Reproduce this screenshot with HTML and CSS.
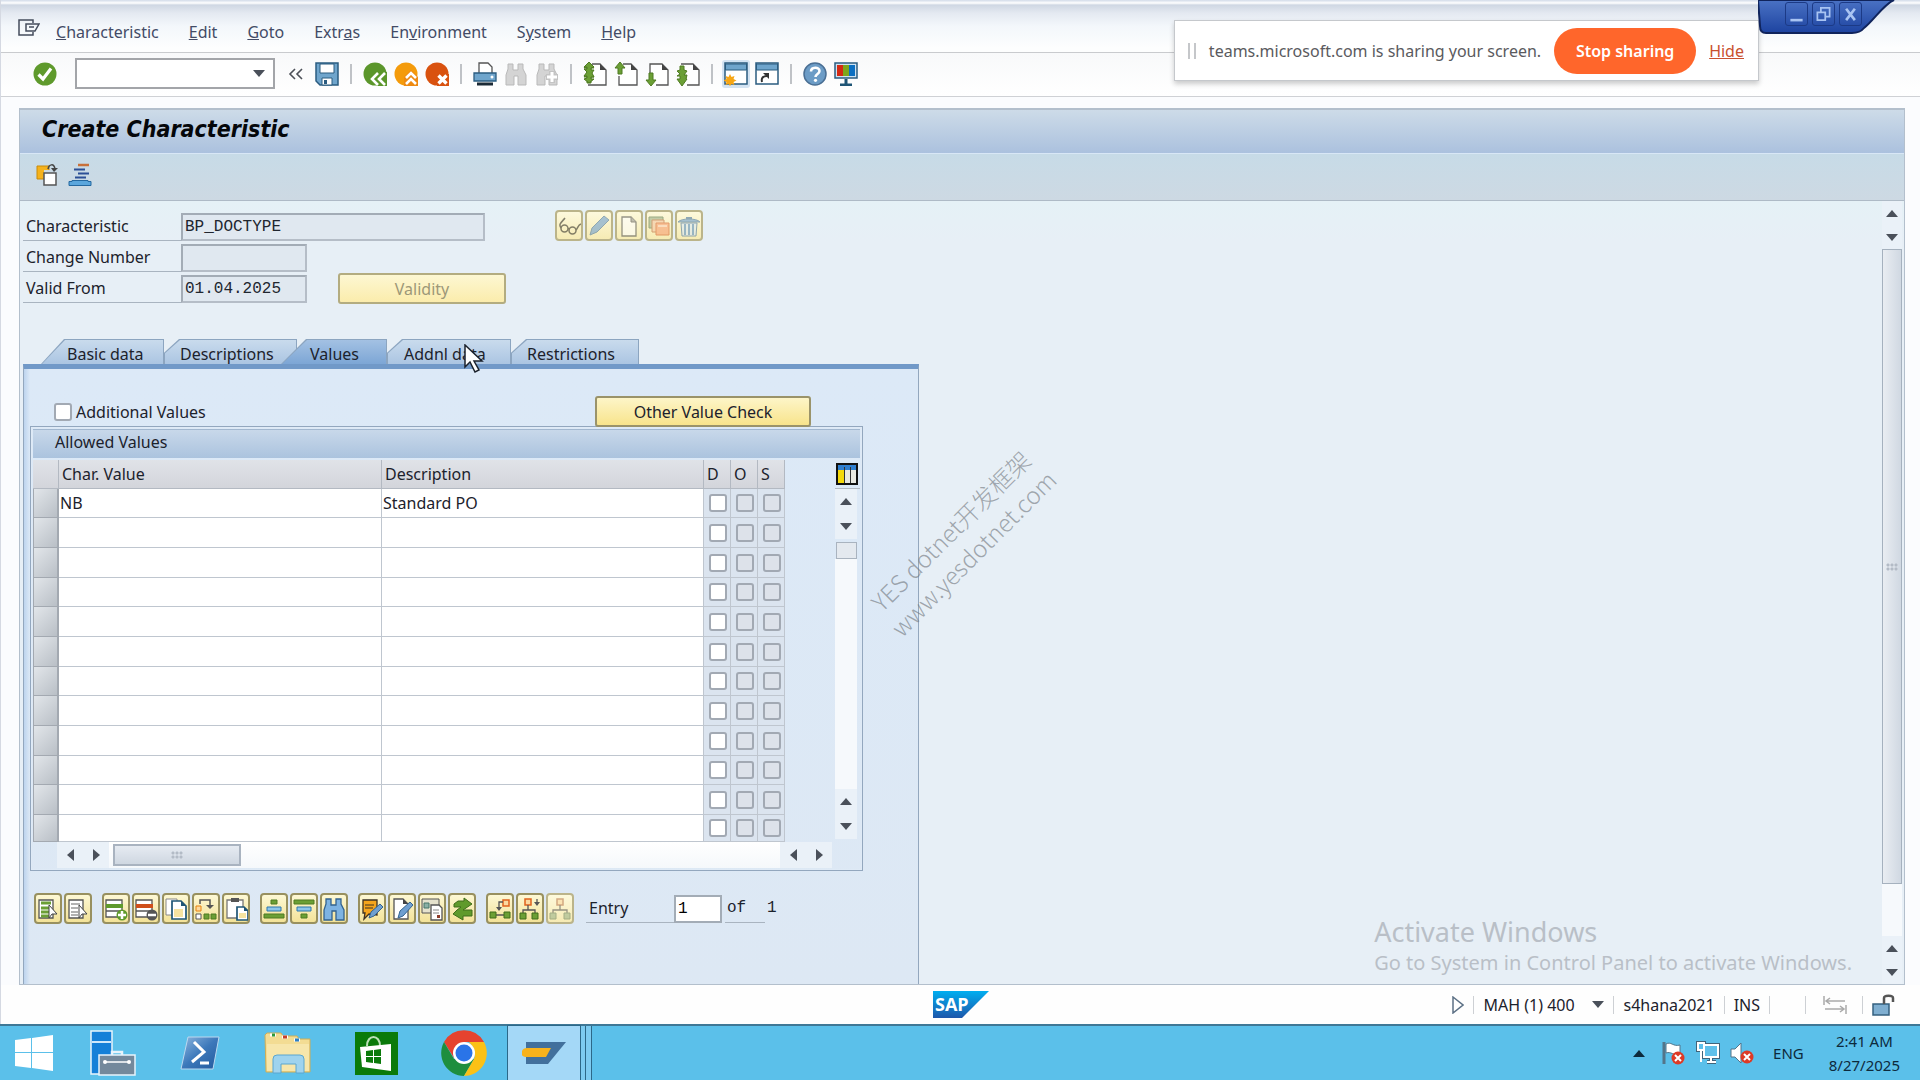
FILE: index.html
```html
<!DOCTYPE html>
<html lang="en">
<head>
<meta charset="utf-8">
<title>Create Characteristic</title>
<link rel="stylesheet" href="styles.css">
</head>
<body>
<svg class="defs" aria-hidden="true">
  <defs>
    <linearGradient id="sapfill" x1="0" y1="0" x2="0" y2="1"><stop offset="0" stop-color="#00aef0"/><stop offset="1" stop-color="#1d57ab"/></linearGradient>
    <linearGradient id="psfill" x1="0" y1="0" x2="1" y2="1"><stop offset="0" stop-color="#8fb8e0"/><stop offset=".5" stop-color="#3c78ba"/><stop offset="1" stop-color="#23599c"/></linearGradient>
    <linearGradient id="tabfill" x1="0" y1="0" x2="0" y2="1"><stop offset="0" stop-color="#4a72c4"/><stop offset="1" stop-color="#1d43a0"/></linearGradient>
  </defs>
</svg>

<div class="window">
  <nav class="menubar">
    <button class="sysmenu" aria-label="Menu"><svg width="22" height="17" viewBox="0 0 22 17" fill="none" stroke="#444c5c" stroke-width="1.5"><path d="M15 4V1H1v15h14v-3"/><path d="M8 5h13l-4 7H8z"/><path d="M11 8h5"/></svg></button>
    <button><u>C</u>haracteristic</button>
    <button><u>E</u>dit</button>
    <button><u>G</u>oto</button>
    <button>Extr<u>a</u>s</button>
    <button>En<u>v</u>ironment</button>
    <button>S<u>y</u>stem</button>
    <button><u>H</u>elp</button>
  </nav>

  <div class="toolbar">
    <button aria-label="Enter"><svg viewBox="0 0 24 24"><circle cx="12" cy="12" r="11.5" fill="#5f9a2c"/><path d="M5.5 12.5l4.500 4.500 8-10.500" fill="none" stroke="#fff" stroke-width="3.200"/></svg></button>
    <div class="command"><input type="text" aria-label="Command"><span class="caret down"></span></div>
    <button class="chev" aria-label="Collapse"><svg viewBox="0 0 24 24" fill="none" stroke="#4c5058" stroke-width="1.600"><path d="M11 7l-5 5 5 5M18 7l-5 5 5 5"/></svg></button>
    <button aria-label="Save"><svg viewBox="0 0 24 24"><path d="M1 1h22v22H5l-4-4z" fill="#6fa5cc" stroke="#2b5c80" stroke-width="1.500"/><path d="M5 2h14v9H5z" fill="#fff" stroke="#2b5c80"/><path d="M7 16h10v7H7z" fill="#fff" stroke="#2b5c80"/><path d="M9 18h3v4H9z" fill="#2b5c80"/></svg></button>
    <span class="sep"></span>
    <button aria-label="Back"><svg viewBox="0 0 24 24"><circle cx="12" cy="12" r="11.500" fill="#5b962b"/><path d="M14 10h10v14H14l-7-7z" fill="#5b962b"/><path d="M15 11l-6 6 6 6M22 11l-6 6 6 6" fill="none" stroke="#fff" stroke-width="2.600"/></svg></button>
    <button aria-label="Exit"><svg viewBox="0 0 24 24"><circle cx="12" cy="12" r="11.500" fill="#f49b0b"/><path d="M10 15l7-7 7 7v9H10z" fill="#ee8a12"/><path d="M12 16l5-5 5 5M12 22l5-5 5 5" fill="none" stroke="#fff" stroke-width="2.600"/></svg></button>
    <button aria-label="Cancel"><svg viewBox="0 0 24 24"><circle cx="12" cy="12" r="11.500" fill="#d9520f"/><path d="M12 12h12v12H12z" fill="#d9520f"/><path d="M13.500 13.500l8 8M21.500 13.500l-8 8" fill="none" stroke="#fff" stroke-width="3.400"/></svg></button>
    <span class="sep"></span>
    <button aria-label="Print"><svg viewBox="0 0 24 24"><path d="M6 11V1h9l4 4v6" fill="#fff" stroke="#555" stroke-width="1.300"/><path d="M1 11h22v8H1z" fill="#6fa5cc" stroke="#2b5c80" stroke-width="1.300"/><circle cx="19" cy="15" r="1.500" fill="#fff"/><path d="M4 22h16" stroke="#1b2a36" stroke-width="3"/></svg></button>
    <button disabled aria-label="Find"><svg viewBox="0 0 24 24"><path d="M4 2h5v6h5V2h5v5l3 6v10h-8v-9h-4v9H2V13l2-6z" fill="#d4d4d4" stroke="#b9b9b9"/></svg></button>
    <button disabled aria-label="Find next"><svg viewBox="0 0 24 24"><path d="M4 2h5v6h5V2h5v5l3 6v10h-8v-9h-4v9H2V13l2-6z" fill="#d4d4d4" stroke="#b9b9b9"/><path d="M17 9v12M11 15h12" stroke="#c4c4c4" stroke-width="6"/><path d="M17 10v10M12 15h10" stroke="#fff" stroke-width="3"/></svg></button>
    <span class="sep"></span>
    <button aria-label="First page"><svg viewBox="0 0 24 24"><path d="M9 2h8l6 6v15H5" fill="#fff" stroke="#555" stroke-width="1.300"/><path d="M17 2v6h6z" fill="#444"/><path d="M6 0l5 6H8v5H4V6H1zM6 9l5 6H8v6H4v-6H1z" fill="#6b9f35" stroke="#4f7a22"/><path d="M1 5l5-5 5 5-3 1v2h3l-2 3 2 4H8v2h3l-5 4-5-4 3-1v-2H1l3-4-3-3h3V5z" fill="#6b9f35" stroke="#4f7a22"/></svg></button>
    <button aria-label="Previous page"><svg viewBox="0 0 24 24"><path d="M9 2h8l6 6v15H5v-9" fill="#fff" stroke="#555" stroke-width="1.300"/><path d="M17 2v6h6z" fill="#444"/><path d="M6 0l5 6H8v6H4V6H1z" fill="#6b9f35" stroke="#4f7a22"/></svg></button>
    <button aria-label="Next page"><svg viewBox="0 0 24 24"><path d="M5 12V2h12l6 6v15H11" fill="#fff" stroke="#555" stroke-width="1.300"/><path d="M17 2v6h6z" fill="#444"/><path d="M6 24l5-6H8v-7H4v7H1z" fill="#6b9f35" stroke="#4f7a22"/></svg></button>
    <button aria-label="Last page"><svg viewBox="0 0 24 24"><path d="M5 2h12l6 6v15H11" fill="#fff" stroke="#555" stroke-width="1.300"/><path d="M17 2v6h6z" fill="#444"/><path d="M1 9l3-1V4h4v4l3 1-3 4h3l-1 4h1l-5 7-5-7h3v-3H1l3-2z" fill="#6b9f35" stroke="#4f7a22"/></svg></button>
    <span class="sep"></span>
    <button class="on" aria-label="New session"><svg viewBox="0 0 24 24"><path d="M1 1h22v21H1z" fill="#fff" stroke="#2b5c80" stroke-width="1.500"/><path d="M1.500 2h21v6h-21z" fill="#6fa5cc" stroke="#2b5c80"/><path d="M6 12l1.500 3 3-1-1 3 3 1.500-3 1.500 1 3-3-1L6 24l-1.500-2-3 1 1-3-3-1.500 3-1.500-1-3 3 1z" fill="#f7a614"/></svg></button>
    <button aria-label="Create shortcut"><svg viewBox="0 0 24 24"><path d="M1 1h22v21H1z" fill="#fff" stroke="#2b5c80" stroke-width="1.500"/><path d="M1.500 2h21v6h-21z" fill="#6fa5cc" stroke="#2b5c80"/><path d="M7 20c-1-4 1-6 5-6" fill="none" stroke="#333" stroke-width="2"/><path d="M8 11h6v6z" fill="#333"/></svg></button>
    <span class="sep"></span>
    <button aria-label="Help"><svg viewBox="0 0 24 24"><circle cx="12" cy="12" r="11" fill="#6c9cc6" stroke="#4a6f94" stroke-width="1.500"/><path d="M8 9.500c0-5 8.500-5 8.500-.5 0 3-4 3-4 6" fill="none" stroke="#fff" stroke-width="2.600"/><circle cx="12.500" cy="18.300" r="1.600" fill="#fff"/></svg></button>
    <button aria-label="Customize layout"><svg viewBox="0 0 24 24"><path d="M1 1h22v15H1z" fill="#cfe3f2" stroke="#2b5c80" stroke-width="1.500"/><path d="M3 3h6v11H3z" fill="#d42a14"/><path d="M9 3h6v11H9z" fill="#7fa61c"/><path d="M15 3h6v11h-6z" fill="#0b6fc2"/><path d="M12 17v5M6 23h12" stroke="#1e5576" stroke-width="3"/></svg></button>
  </div>

  <main class="work">
    <h1>Create Characteristic</h1>
    <div class="apptools">
      <button aria-label="Create from template"><svg viewBox="0 0 24 24"><path d="M2 3h12v13H2z" fill="#f5b21c" stroke="#c98a08"/><path d="M9 7h8v4H9z" fill="#cbdae5"/><path d="M9 10h12v12H9z" fill="#fff" stroke="#555" stroke-width="1.500"/><path d="M13 6c1-5 6-6 7 0" fill="none" stroke="#444" stroke-width="1.500"/><path d="M16 5h7l-4 4z" fill="#444"/></svg></button>
      <button aria-label="Hierarchy"><svg viewBox="0 0 24 24"><path d="M10 2h11" stroke="#c8703a" stroke-width="2.500"/><path d="M6 6.500h11M10 10.500h11M7 14.500h11" stroke="#2b4f96" stroke-width="2"/><path d="M1 18.500h3v-1h16v1h3v4H1z" fill="#5aa6dd" stroke="#2468a0"/></svg></button>
    </div>

    <div class="screen">
      <div class="content">
        <div class="form">
          <div class="field"><label for="f-char">Characteristic</label><input id="f-char" class="wide" type="text" value="BP_DOCTYPE" readonly>
            <div class="pushes">
              <button class="push dim" aria-label="Display"><svg viewBox="0 0 24 24" fill="none" stroke="#35332a" stroke-width="1.500"><circle cx="7.500" cy="14.500" r="3.500"/><circle cx="15.500" cy="16.500" r="3.500"/><path d="M4 14c-3-4 1-6 4-10M19 16c2-2 2-5 5-6M11 14.500l1.500.5"/></svg></button>
              <button class="push dim" aria-label="Change"><svg viewBox="0 0 24 24"><path d="M3 21l2-7L17 2l5 4L10 18z" fill="#6f9fd0" stroke="#49759f"/></svg></button>
              <button class="push dim" aria-label="Create"><svg viewBox="0 0 24 24"><path d="M5 3h9l5 5v14H5z" fill="#fff" stroke="#555" stroke-width="1.300"/><path d="M14 3v5h5" fill="#999" stroke="#555"/></svg></button>
              <button class="push dim" aria-label="Copy"><svg viewBox="0 0 24 24"><path d="M2 3h14v11H2z" fill="#9fb08a" stroke="#5d7a50"/><path d="M5 6h12v12H5z" fill="#f3c7a4" stroke="#b96a3c"/><path d="M9 9h13v12H9z" fill="#f7a073" stroke="#d4622f"/><path d="M11 12h9" stroke="#fff"/></svg></button>
              <button class="push dim" aria-label="Delete"><svg viewBox="0 0 24 24"><path d="M1 8c3-4 19-4 22 0z" fill="#6f9fd0" stroke="#49759f"/><path d="M9 4h6" stroke="#49759f" stroke-width="2"/><path d="M4 9h16l-1 13H5z" fill="#dbe9f5" stroke="#49759f"/><path d="M8 10v11M12 10v11M16 10v11" stroke="#5a8fc4" stroke-width="2"/></svg></button>
            </div>
          </div>
          <div class="field"><label for="f-chg">Change Number</label><input id="f-chg" type="text" value="" readonly></div>
          <div class="field"><label for="f-valid">Valid From</label><input id="f-valid" type="text" value="01.04.2025" readonly><button class="bar validity" disabled>Validity</button></div>
        </div>

        <div class="tabs" role="tablist">
          <button class="tab first" role="tab">Basic data</button>
          <button class="tab desc" role="tab">Descriptions</button>
          <button class="tab active" role="tab" aria-selected="true">Values</button>
          <button class="tab addnl" role="tab">Addnl data</button>
          <button class="tab restr" role="tab">Restrictions</button>
        </div>

        <section class="panel">
          <div class="options">
            <label class="check"><input type="checkbox">Additional Values</label>
            <button class="bar other">Other Value Check</button>
          </div>

          <div class="grid">
            <h2>Allowed Values</h2>
            <div class="gridbody">
              <table>
                <colgroup><col class="c-sel"><col class="c-val"><col class="c-desc"><col class="c-flag"><col class="c-flag"><col class="c-flag"></colgroup>
                <thead><tr><th></th><th>Char. Value</th><th>Description</th><th>D</th><th>O</th><th>S</th></tr></thead>
                <tbody>
                  <tr><th></th><td>NB</td><td>Standard PO</td><td><input type="checkbox" aria-label="D"></td><td><input type="checkbox" aria-label="O" disabled></td><td><input type="checkbox" aria-label="S" disabled></td></tr>
                  <tr><th></th><td></td><td></td><td><input type="checkbox" aria-label="D"></td><td><input type="checkbox" aria-label="O" disabled></td><td><input type="checkbox" aria-label="S" disabled></td></tr>
                  <tr><th></th><td></td><td></td><td><input type="checkbox" aria-label="D"></td><td><input type="checkbox" aria-label="O" disabled></td><td><input type="checkbox" aria-label="S" disabled></td></tr>
                  <tr><th></th><td></td><td></td><td><input type="checkbox" aria-label="D"></td><td><input type="checkbox" aria-label="O" disabled></td><td><input type="checkbox" aria-label="S" disabled></td></tr>
                  <tr><th></th><td></td><td></td><td><input type="checkbox" aria-label="D"></td><td><input type="checkbox" aria-label="O" disabled></td><td><input type="checkbox" aria-label="S" disabled></td></tr>
                  <tr><th></th><td></td><td></td><td><input type="checkbox" aria-label="D"></td><td><input type="checkbox" aria-label="O" disabled></td><td><input type="checkbox" aria-label="S" disabled></td></tr>
                  <tr><th></th><td></td><td></td><td><input type="checkbox" aria-label="D"></td><td><input type="checkbox" aria-label="O" disabled></td><td><input type="checkbox" aria-label="S" disabled></td></tr>
                  <tr><th></th><td></td><td></td><td><input type="checkbox" aria-label="D"></td><td><input type="checkbox" aria-label="O" disabled></td><td><input type="checkbox" aria-label="S" disabled></td></tr>
                  <tr><th></th><td></td><td></td><td><input type="checkbox" aria-label="D"></td><td><input type="checkbox" aria-label="O" disabled></td><td><input type="checkbox" aria-label="S" disabled></td></tr>
                  <tr><th></th><td></td><td></td><td><input type="checkbox" aria-label="D"></td><td><input type="checkbox" aria-label="O" disabled></td><td><input type="checkbox" aria-label="S" disabled></td></tr>
                  <tr><th></th><td></td><td></td><td><input type="checkbox" aria-label="D"></td><td><input type="checkbox" aria-label="O" disabled></td><td><input type="checkbox" aria-label="S" disabled></td></tr>
                  <tr><th></th><td></td><td></td><td><input type="checkbox" aria-label="D"></td><td><input type="checkbox" aria-label="O" disabled></td><td><input type="checkbox" aria-label="S" disabled></td></tr>
                </tbody>
              </table>
              <div class="vside">
                <button class="config" aria-label="Table settings"><svg width="22" height="22" viewBox="0 0 22 22"><path d="M1 1h20v20H1z" fill="#e9e9e2" stroke="#111" stroke-width="2"/><path d="M2 2h18v5H2z" fill="#2f7fd0"/><path d="M2 7h6v13H2z" fill="#f5d90a"/><path d="M8.500 4v16M14.500 4v16" stroke="#333"/></svg></button>
                <div class="vscroll">
                  <button aria-label="Up"><span class="caret up"></span></button>
                  <button aria-label="Page up"><span class="caret down"></span></button>
                  <span class="vthumb"></span>
                  <span class="fill"></span>
                  <button aria-label="Page down"><span class="caret up"></span></button>
                  <button aria-label="Down"><span class="caret down"></span></button>
                </div>
              </div>
            </div>
            <div class="hscroll">
              <button aria-label="Left"><span class="caret left"></span></button>
              <button aria-label="Page left"><span class="caret right"></span></button>
              <span class="htrack"><span class="hthumb"><span class="grip"></span></span></span>
              <button aria-label="Page right"><span class="caret left"></span></button>
              <button aria-label="Right"><span class="caret right"></span></button>
            </div>
          </div>

          <div class="actions">
            <div class="pushes">
              <button class="push" aria-label="Select all"><svg viewBox="0 0 24 24"><path d="M3 3h14v18H3z" fill="#fff" stroke="#555" stroke-width="1.300"/><path d="M5 6h10M5 11h8M5 15h8M5 19h8" stroke="#6b9f35" stroke-width="3"/><path d="M13 8l8 9h-5l-3 4z" fill="#fff" stroke="#444"/></svg></button>
              <button class="push" aria-label="Deselect all"><svg viewBox="0 0 24 24"><path d="M3 3h14v18H3z" fill="#fff" stroke="#555" stroke-width="1.300"/><path d="M5 7h9M5 11h7M5 15h7M5 18h7" stroke="#999" stroke-width="1.300"/><path d="M13 8l8 9h-5l-3 4z" fill="#fff" stroke="#444"/></svg></button>
            </div>
            <div class="pushes">
              <button class="push" aria-label="Insert row"><svg viewBox="0 0 24 24"><path d="M2 3h16v17H2zM2 14h16" fill="#fff" stroke="#555" stroke-width="1.300"/><path d="M2 9h17" stroke="#5f9a2c" stroke-width="4"/><circle cx="18" cy="18" r="5.500" fill="#5f9a2c"/><path d="M18 14v8M14 18h8" stroke="#fff" stroke-width="2.500"/></svg></button>
              <button class="push" aria-label="Delete row"><svg viewBox="0 0 24 24"><path d="M2 3h16v17H2zM2 14h16" fill="#fff" stroke="#555" stroke-width="1.300"/><path d="M2 9h17" stroke="#cf4f1b" stroke-width="4"/><circle cx="18" cy="18" r="5.500" fill="#555"/><path d="M14 18h8" stroke="#fff" stroke-width="2.500"/></svg></button>
              <button class="push" aria-label="Copy rows"><svg viewBox="0 0 24 24"><path d="M2 2h11v16H2z" fill="#fff" stroke="#888"/><path d="M8 4h9l5 5v13H8z" fill="#fff" stroke="#1e5576" stroke-width="1.700"/><path d="M17 4v5h5z" fill="#1e5576"/><path d="M10 12h9v8h-9z" fill="#f6e3a0"/></svg></button>
              <button class="push" aria-label="Move rows"><svg viewBox="0 0 24 24"><path d="M6 7V3h10v7" fill="none" stroke="#555" stroke-width="1.500"/><path d="M12 8h8l-4 4z" fill="#555"/><path d="M2 9h5v5H2z" fill="#fbd9a0" stroke="#e8820c"/><path d="M2 17h5v5H2z" fill="#fff" stroke="#555"/><path d="M10 17h5v5h-5zM17 17h5v5h-5z" fill="#6b9f35" stroke="#4f7a22"/></svg></button>
              <button class="push" aria-label="Paste"><svg viewBox="0 0 24 24"><path d="M3 3h16v18H3z" fill="#fff" stroke="#777" stroke-width="1.300"/><path d="M7 1h8v4H7z" fill="#555"/><path d="M13 10h7l4 4v9H13z" fill="#fff" stroke="#1e5576" stroke-width="1.700"/><path d="M20 10v4h4z" fill="#1e5576"/><path d="M15 16h7v5h-7z" fill="#f6e3a0"/></svg></button>
            </div>
            <div class="pushes">
              <button class="push" aria-label="Sort ascending"><svg viewBox="0 0 24 24"><path d="M9 3h6v4H9z" fill="#6b9f35" stroke="#4f7a22"/><path d="M5 10h14v4H5z" fill="#8cc6ea" stroke="#2d76ad"/><path d="M2 17h20v4H2z" fill="#6b9f35" stroke="#4f7a22"/></svg></button>
              <button class="push" aria-label="Sort descending"><svg viewBox="0 0 24 24"><path d="M2 3h20v4H2z" fill="#6b9f35" stroke="#4f7a22"/><path d="M5 10h14v4H5z" fill="#8cc6ea" stroke="#2d76ad"/><path d="M9 17h6v4H9z" fill="#6b9f35" stroke="#4f7a22"/></svg></button>
              <button class="push" aria-label="Find value"><svg viewBox="0 0 24 24"><path d="M4 2h5v6h5V2h5v5l3 6v10h-8v-9h-4v9H2V13l2-6z" fill="#7db3e2" stroke="#33638f" stroke-width="1.300"/></svg></button>
            </div>
            <div class="pushes">
              <button class="push" aria-label="Edit long text"><svg viewBox="0 0 24 24"><path d="M3 3h14v15l-8-1-5 5 1-6H3z" fill="#f5a51c" stroke="#3c3224" stroke-width="1.300"/><path d="M5 8h9M5 11h8" stroke="#3c3224"/><path d="M9 21l2-6 9-8 3 3-9 9z" fill="#6f9fd0" stroke="#33638f"/></svg></button>
              <button class="push" aria-label="Edit document"><svg viewBox="0 0 24 24"><path d="M4 2h9l5 5v15H4z" fill="#fff" stroke="#555" stroke-width="1.300"/><path d="M13 2v5h5z" fill="#444"/><path d="M8 21l2-7 10-9 3 3-10 11z" fill="#6f9fd0" stroke="#33638f"/></svg></button>
              <button class="push" aria-label="Documents"><svg viewBox="0 0 24 24"><path d="M2 2h17v14H2z" fill="#e5e2cd" stroke="#555"/><path d="M4 6h5v5H4z" fill="#8ab0a5" stroke="#47776a"/><path d="M11 8h8l3 3v12H11z" fill="#fff" stroke="#555" stroke-width="1.300"/><path d="M13 13h6M13 16h6" stroke="#888"/><path d="M17 18h3v3h-3z" fill="#8d3b2a"/></svg></button>
              <button class="push" aria-label="Exchange"><svg viewBox="0 0 24 24"><path d="M4 7l4-3h6V1l8 6-9 6h9v6h-9v4l-10-6 4-4 4-3H4z" fill="#5f9a2c" stroke="#3f6d1b"/></svg></button>
            </div>
            <div class="pushes">
              <button class="push" aria-label="Same level"><svg viewBox="0 0 24 24"><path d="M15 3h6v6h-6z" fill="#fbd9a0" stroke="#e0621c" stroke-width="1.500"/><path d="M15 5h-4v6M7 18h10" fill="none" stroke="#555" stroke-width="1.300"/><path d="M8 10h6l-3 4z" fill="#555"/><path d="M2 15h6v6H2zM16 15h6v6h-6z" fill="#6b9f35" stroke="#3f6d1b"/></svg></button>
              <button class="push" aria-label="Lower level"><svg viewBox="0 0 24 24"><path d="M7 2h6v6H7z" fill="#fbd9a0" stroke="#e0621c" stroke-width="1.500"/><path d="M10 8v5M5 16v-3h12v3M19 2v4" fill="none" stroke="#555" stroke-width="1.300"/><path d="M16 5h6l-3 4z" fill="#555"/><path d="M2 16h6v6H2zM14 16h6v6h-6z" fill="#6b9f35" stroke="#3f6d1b"/></svg></button>
              <button class="push dim" aria-label="Hierarchy view"><svg viewBox="0 0 24 24"><path d="M9 2h6v6H9z" fill="#fbd9a0" stroke="#b9774c" stroke-width="1.500"/><path d="M12 8v5M5 16v-3h14v3" fill="none" stroke="#555" stroke-width="1.300"/><path d="M2 16h6v6H2zM16 16h6v6h-6z" fill="#9db58a" stroke="#6f8560"/></svg></button>
            </div>
            <div class="entry"><label for="f-entry">Entry</label><input id="f-entry" type="text" value="1"><span class="of">of</span><span class="total">1</span></div>
          </div>
        </section>
      </div>

      <div class="pagescroll">
        <button aria-label="Scroll up"><span class="caret up"></span></button>
        <button aria-label="Scroll page up"><span class="caret down"></span></button>
        <span class="pthumb"><span class="grip"></span></span>
        <span class="fill"></span>
        <button aria-label="Scroll page down"><span class="caret up"></span></button>
        <button aria-label="Scroll down"><span class="caret down"></span></button>
      </div>

      <div class="activate"><p class="big">Activate Windows</p><p>Go to System in Control Panel to activate Windows.</p></div>
    </div>
  </main>

  <footer class="status">
    <svg class="saplogo" width="56" height="27" viewBox="0 0 56 27" role="img" aria-label="SAP"><path d="M0 0h56L29 27H0z" fill="url(#sapfill)"/><text x="2" y="20">SAP</text></svg>
    <div class="info">
      <svg width="12" height="18" viewBox="0 0 12 18"><path d="M1 1l10 8-10 8z" fill="#fff" stroke="#5c7085" stroke-width="1.500"/></svg>
      <span class="line"></span>
      <button class="session">MAH (1) 400<span class="caret down"></span></button>
      <span class="line"></span>
      <span>s4hana2021</span>
      <span class="line"></span>
      <span>INS</span>
      <span class="line"></span>
      <span class="blank"></span>
      <span class="line"></span>
      <svg class="arrows" width="24" height="18" viewBox="0 0 24 18" fill="none" stroke="#aaa" stroke-width="1.500"><path d="M1 0v9M3 5h19M7 2L3 5l4 3M23 9v9M2 13h19M17 10l4 3-4 3"/></svg>
      <span class="line"></span>
      <svg width="24" height="22" viewBox="0 0 24 22"><path d="M1 10h16v11H1z" fill="#7faed0" stroke="#35607f" stroke-width="1.500"/><path d="M12 10V4c0-3 9-3 9 0v4" fill="none" stroke="#555" stroke-width="2.500"/></svg>
    </div>
  </footer>
</div>

<nav class="taskbar">
  <div class="apps">
    <button class="start" aria-label="Start"><svg width="38" height="36" viewBox="0 0 38 36" fill="#fff"><path d="M0 5l16-2v14H0zM17 3l21-3v17H17zM0 18h16v15L0 31zM17 18h21v18l-21-3z"/></svg></button>
    <button class="server" aria-label="Server Manager"><svg width="46" height="46" viewBox="0 0 46 46"><path d="M1 1h21v43H1z" fill="#1580d8" stroke="#e8f4fc" stroke-width="1.500"/><path d="M2 12h19" stroke="#cfe8fa" stroke-width="2"/><path d="M9 25h36v20H9z" fill="#74899c" stroke="#e8f4fc" stroke-width="1.500"/><path d="M22 25v-3h10v3" fill="none" stroke="#e8f4fc" stroke-width="2.500"/><path d="M14 32h26" stroke="#fff" stroke-width="1.500"/><circle cx="15" cy="32" r="2" fill="#fff"/><circle cx="39" cy="32" r="2" fill="#fff"/></svg></button>
    <button aria-label="PowerShell"><svg width="40" height="34" viewBox="0 0 40 34"><path d="M8 1h31l-6 32H1z" fill="url(#psfill)" stroke="#bcd8ef"/><path d="M14 6l10 10-12 10M20 27h9" fill="none" stroke="#fff" stroke-width="3"/></svg></button>
    <button aria-label="File Explorer"><svg width="48" height="42" viewBox="0 0 48 42"><path d="M1 3l2-2h14l2 3h14l2 3h11v33H2z" fill="#f3dc93" stroke="#cfae57"/><path d="M6 3h6M18 5h6M30 8h6" stroke="#fff" stroke-width="3"/><path d="M8 3h3" stroke="#2c9a3c" stroke-width="3"/><path d="M19 5h4" stroke="#c7412d" stroke-width="3"/><path d="M31 8h4" stroke="#2d7fc4" stroke-width="3"/><path d="M3 12h42v27H3z" fill="#f7e6ab"/><path d="M9 41V27q0-4 4-4h23q4 0 4 4v14h-8v-9H17v9z" fill="#9fd3ee" stroke="#5aa6d0"/></svg></button>
    <button aria-label="Store"><svg width="43" height="43" viewBox="0 0 43 43"><path d="M0 0h43v43H0z" fill="#0a7a0a"/><path d="M12 14c0-12 13-12 13 0" fill="none" stroke="#bde0b8" stroke-width="2"/><path d="M5 15l31-3v27L7 35z" fill="#fff"/><path d="M11 19l7-1v6h-7zM19 18l7-1v7h-7zM11 25h7v6l-7-1zM19 25h7v7l-7-1z" fill="#0a7a0a"/></svg></button>
    <button aria-label="Chrome"><svg width="46" height="46" viewBox="0 0 46 46"><path d="M3 12A23 23 0 0 1 43 12H23L13 28z" fill="#e5432f"/><path d="M3 12A23 23 0 0 0 23 46l10-17H13z" fill="#1e8e3e"/><path d="M43 12A23 23 0 0 1 23 46l10-17q3-9-5-17z" fill="#fbc116"/><circle cx="23" cy="23" r="11" fill="#fff"/><circle cx="23" cy="23" r="8.500" fill="#2a74e8"/></svg></button>
    <button class="current" aria-label="SAP GUI"><svg width="44" height="22" viewBox="0 0 44 22"><path d="M4 0h40L26 22H4z" fill="#42709c"/><path d="M0 9q1-3 5-3h24l-5 9H5q-4 0-5-2z" fill="#f7b21c"/></svg></button>
  </div>
  <div class="tray">
    <button aria-label="Show hidden icons"><span class="caret up"></span></button>
    <svg width="24" height="24" viewBox="0 0 24 24"><path d="M2 1v22" stroke="#53758a" stroke-width="3"/><path d="M4 3c5-3 7 3 14 1v9c-7 2-9-3-14-1z" fill="#fff" stroke="#53758a"/><circle cx="16" cy="17" r="6.500" fill="#dd3a26"/><path d="M13 14l6 6M19 14l-6 6" stroke="#fff" stroke-width="2"/></svg>
    <svg width="24" height="24" viewBox="0 0 24 24"><g fill="#5fc0ea" stroke="#41647a" stroke-width="4"><path d="M8 4h14v12H8z"/><path d="M2 2h6v7H2zM11 21h9M15 16v5"/></g><g fill="#5fc0ea" stroke="#fff" stroke-width="2"><path d="M8 4h14v12H8z"/><path d="M2 2h6v7H2zM5 9v12M11 21h9M15 16v5"/></g></svg>
    <svg width="24" height="24" viewBox="0 0 24 24"><path d="M1 8h4l6-6v20l-6-6H1z" fill="#fff" stroke="#53758a"/><circle cx="17" cy="16" r="6.500" fill="#dd3a26"/><path d="M14 13l6 6M20 13l-6 6" stroke="#fff" stroke-width="2"/></svg>
    <span class="lang">ENG</span>
    <div class="clock"><span>2:41 AM</span><span>8/27/2025</span></div>
  </div>
</nav>

<div class="sharing">
  <span class="handle"></span>
  <span>teams.microsoft.com is sharing your screen.</span>
  <button>Stop sharing</button>
  <a href="#">Hide</a>
</div>

<div class="winctl">
  <svg width="138" height="37" viewBox="0 0 138 37"><path d="M0 0h136c-10 4-20 20-30 28q-4 5-12 5H8q-6 0-6-7z" fill="url(#tabfill)" stroke="#10245c" stroke-width="2"/></svg>
  <div class="winbtns">
    <button aria-label="Minimize"><svg viewBox="0 0 24 24"><path d="M5 19h14" stroke="#a9c4f2" stroke-width="3"/></svg></button>
    <button aria-label="Restore"><svg viewBox="0 0 24 24" fill="none" stroke="#a9c4f2" stroke-width="2"><path d="M9 9V5h10v10h-4M5 10h9v9H5z"/></svg></button>
    <button aria-label="Close"><svg viewBox="0 0 24 24"><path d="M7 6l10 13M17 6L7 19" stroke="#a9c4f2" stroke-width="3"/></svg></button>
  </div>
</div>

<div class="watermark"><span>YES dotnet开发框架</span><span>www.yesdotnet.com</span></div>
<svg class="pointer" width="20" height="30" viewBox="0 0 20 30"><path d="M1 1v22l5-5 5 10 4-2-5-9h8z" fill="#fff" stroke="#1b222c" stroke-width="1.500"/></svg>
</body>
</html>
```
FILE: styles.css
```css
* { box-sizing: border-box; }
body {
  margin: 0;
  min-height: 100vh;
  display: flex;
  flex-direction: column;
  position: relative;
  background: #fbfcfe;
  color: #1c222c;
  font: 16px/24px "Noto Sans", "Open Sans", sans-serif;
}
button { font: inherit; color: inherit; background: none; border: 0; padding: 0; margin: 0; }
h1, h2, p { margin: 0; }
svg { display: block; flex: none; }
.defs { position: absolute; width: 0; height: 0; }

.caret { width: 0; height: 0; border: 6px solid transparent; flex: none; }
.caret.up { border-top: 0; border-bottom: 7px solid #4a505a; }
.caret.down { border-bottom: 0; border-top: 7px solid #4a505a; }
.caret.left { border-left: 0; border-right: 7px solid #4a505a; }
.caret.right { border-right: 0; border-left: 7px solid #4a505a; }
.grip {
  width: 12px;
  height: 8px;
  background: radial-gradient(circle, #b3bbc6 1px, transparent 2px) 0 0 / 4px 4px;
}

.window { flex: 1; display: flex; flex-direction: column; border-left: 1px solid #d5d9e2; }

.menubar {
  height: 53px;
  padding: 0 17px;
  display: flex;
  align-items: center;
  gap: 30px;
  color: #434b66;
  background: linear-gradient(#d2dbe9 0, #fff 3px, #cfd7e3 5px, #e4e9f1 13px, #f3f7fb 26px, #fdfefe 48px);
  border-bottom: 1px solid #c9cbce;
}
.menubar button { margin-top: 11px; }
.menubar .sysmenu { margin: 2px -14px 0 0; }

.toolbar {
  height: 44px;
  padding: 0 0 2px 32px;
  display: flex;
  align-items: center;
  gap: 7px;
  background: linear-gradient(#f8f9fa, #fff);
  border-bottom: 1px solid #cfd1d5;
}
.toolbar svg { width: 24px; height: 24px; }
.toolbar .sep { width: 10px; height: 20px; background: linear-gradient(#bfc2c6, #bfc2c6) center / 2px 100% no-repeat; }
.toolbar .on { margin: 0 -2px; padding: 2px; background: #d3e3f2; border-radius: 3px; }
.toolbar .chev { margin-left: 2px; }
.command {
  width: 200px;
  height: 31px;
  margin-left: 11px;
  display: flex;
  align-items: center;
  padding-right: 8px;
  background: #fff;
  border: 2px solid #a3a5a9;
}
.command input { flex: 1; min-width: 0; border: 0; outline: 0; background: none; font: inherit; }

.work {
  flex: 1;
  display: flex;
  flex-direction: column;
  margin: 11px 15px 0 18px;
  border: 1px solid #b3bfcc;
  border-top-width: 2px;
}
h1 {
  height: 44px;
  padding-left: 22px;
  font: italic bold 23px/38px "DejaVu Sans Condensed", "DejaVu Sans", sans-serif;
  color: #05070a;
  background: linear-gradient(#cddbe8, #abc1de);
  border-bottom: 1px solid #d8e7f6;
}
.apptools {
  height: 47px;
  padding: 0 15px 4px;
  display: flex;
  align-items: center;
  gap: 9px;
  background: linear-gradient(#c7dbe7, #cdd9e3);
  border-bottom: 1px solid #aebac6;
}
.apptools svg { width: 24px; height: 24px; }

.screen {
  flex: 1;
  display: flex;
  position: relative;
  background: linear-gradient(#e5f1f6, #e7eff6 40px);
}
.content { flex: 1; display: flex; flex-direction: column; padding-left: 3px; }

.form { display: grid; gap: 3px; padding-top: 12px; }
.field { display: flex; height: 28px; }
.field label { width: 158px; padding-left: 3px; line-height: 27px; border-bottom: 1px solid #a9b4c0; }
.field input {
  width: 126px;
  padding: 0 2px;
  font: 16px/24px "Liberation Mono", monospace;
  color: #20262f;
  background: #e0e8f0;
  border: 2px solid #a3acb6;
  border-right-color: #b5bdc7;
  border-bottom-color: #b5bdc7;
}
.field .wide { width: 304px; }
.field .pushes { margin: -3px 0 0 70px; }
.pushes { display: flex; gap: 2px; }
.push {
  width: 28px;
  height: 31px;
  display: flex;
  align-items: center;
  justify-content: center;
  background: linear-gradient(#fdf8d4, #f3e298);
  border: 2px solid #98905f;
  border-radius: 4px;
}
.push svg { width: 24px; height: 24px; }
.push.dim { border-color: #bbb48a; background: linear-gradient(#fdf9dc, #f6ebb4); }
.push.dim svg { opacity: .6; }
.bar {
  height: 31px;
  background: linear-gradient(#fdf5c8, #f8e48c);
  border: 2px solid #9a936a;
  border-radius: 3px;
  line-height: 26px;
}
.validity { width: 168px; margin: -2px 0 0 31px; color: #9d9878; border-color: #b3ac80; background: linear-gradient(#fdf7d2, #fbecac); }

.tabs { display: flex; height: 25px; margin-top: 36px; padding-left: 18px; }
.tab {
  position: relative;
  z-index: 0;
  height: 25px;
  line-height: 26px;
  padding: 2px 0 0 17px;
  text-align: left;
  --shape: polygon(0 100%, 0 55%, 15px 0, 100% 0, 100% 100%);
}
.tab::before, .tab::after { content: ""; position: absolute; z-index: -1; inset: 0; clip-path: var(--shape); background: #8ca5c0; }
.tab::after { inset: 1px 1px 0 1px; background: linear-gradient(#c9dbed, #abc5e2); }
.first { width: 123px; padding-left: 26px; --shape: polygon(0 100%, 23px 0, 100% 0, 100% 100%); }
.desc { width: 133px; padding-left: 16px; }
.active { z-index: 1; width: 106px; margin-left: -16px; padding-left: 29px; --shape: polygon(0 100%, 25px 0, 100% 0, 100% 100%); }
.active::after { background: linear-gradient(#a3c1e3, #7da6d5); }
.addnl { width: 124px; }
.restr { width: 128px; padding-left: 16px; }

.panel {
  flex: 1;
  max-width: 896px;
  padding: 27px 6px 40px;
  border: 1px solid #93a7be;
  border-top: 5px solid #7199c8;
  border-bottom: 0;
  background: linear-gradient(90deg, #bdd4ee, rgba(221, 232, 244, 0) 6px), linear-gradient(#dce9f7, #dde8f4);
}
.options { display: flex; justify-content: space-between; width: 832px; height: 30px; padding: 0 51px 0 24px; }
.check { display: flex; align-items: center; gap: 4px; padding-top: 2px; }
.other { width: 216px; }
input[type="checkbox"] {
  appearance: none;
  display: block;
  width: 18px;
  height: 18px;
  margin: 0;
  background: #fff;
  border: 2px solid #a2a9b3;
  border-radius: 3px;
}
input[type="checkbox"]:disabled { background: #dde2ea; }

.grid { width: 833px; padding: 2px; border: 1px solid #93a7be; box-shadow: inset 0 0 0 1px #dfeaf6; }
h2 {
  height: 29px;
  padding-left: 22px;
  margin-bottom: 2px;
  font: inherit;
  background: linear-gradient(#c8d8ea, #abc3de);
  border-top: 1px solid #a2b7cf;
}
.gridbody { display: flex; justify-content: space-between; }
table { width: 752px; table-layout: fixed; border-collapse: separate; border-spacing: 0; }
.c-sel { width: 26px; }
.c-val { width: 323px; }
.c-desc { width: 322px; }
.c-flag { width: 27px; }
thead th {
  height: 29px;
  padding: 0 0 0 3px;
  text-align: left;
  font-weight: normal;
  background: linear-gradient(#e0e3e8, #d3d5db);
  border-right: 1px solid #b3b9c2;
  border-bottom: 1px solid #b3b9c2;
}
tbody th {
  background: linear-gradient(135deg, #e2e6ea, #b9bfc6);
  border: 1px solid #a3a9b1;
  border-right-width: 2px;
  border-top: 0;
}
tbody tr { height: 30px; }
tbody tr:nth-child(3n+1) { height: 29px; }
tbody tr:last-child { height: 27px; }
tbody td {
  padding: 0 0 0 1px;
  line-height: 20px;
  background: #fff;
  border-right: 1px solid #bfc6cf;
  border-bottom: 1px solid #bfc6cf;
}
tbody td:nth-child(n+4) { padding-left: 5px; background: #dbe4ef; }

.vside { width: 25px; display: flex; flex-direction: column; }
.config { height: 29px; padding-left: 1px; border-bottom: 1px solid #b3b9c2; }
.vscroll { flex: 1; display: flex; flex-direction: column; padding: 0 3px 3px 0; }
.vscroll button, .pagescroll button { height: 25px; display: flex; align-items: center; justify-content: center; background: #eaf1f8; }
.vthumb { height: 17px; margin: 3px 0 0 1px; background: #e4e9ef; border: 1px solid #a9b3bf; }
.fill { flex: 1; background: #f6f9fc; }
.hscroll { display: flex; height: 26px; padding: 0 28px 0 24px; }
.hscroll button { width: 26px; display: flex; align-items: center; justify-content: center; background: #eaf1f8; }
.htrack { flex: 1; padding: 2px 0 1px 4px; background: linear-gradient(#fff, #f5f8fb); }
.hthumb {
  width: 128px;
  height: 22px;
  display: flex;
  align-items: center;
  justify-content: center;
  background: linear-gradient(#e6ebf2, #cfd7e1);
  border: 2px solid #a9b3c0;
}

.actions { display: flex; gap: 10px; padding: 22px 0 0 4px; }
.entry { display: flex; height: 28px; margin: 2px 0 0 2px; line-height: 26px; }
.entry label { width: 88px; padding-left: 3px; border-bottom: 1px solid #a9b4c0; }
.entry input { width: 48px; padding: 0 2px; font: 16px/24px "Liberation Mono", monospace; border: 2px solid #a3acb6; }
.entry .of { width: 40px; margin-left: 3px; padding-left: 2px; font-family: "Liberation Mono", monospace; border-bottom: 1px solid #a9b4c0; }
.entry .total { padding-left: 2px; font-family: "Liberation Mono", monospace; }

.pagescroll { width: 22px; display: flex; flex-direction: column; padding-right: 2px; }
.pagescroll button { height: 24px; }
.pthumb {
  flex: 1;
  display: flex;
  align-items: center;
  justify-content: center;
  background: linear-gradient(90deg, #e9edf2, #d0d8e2);
  border: 1px solid #a5b1be;
}
.pagescroll .fill { flex: 0 0 52px; }
.activate { position: absolute; right: 52px; bottom: 7px; color: #b9bfc7; font-size: 20px; line-height: 28px; }
.activate .big { font-size: 27px; line-height: 34px; }

.status {
  height: 39px;
  display: flex;
  align-items: center;
  justify-content: flex-end;
  background: #fefefe;
}
.saplogo { margin-right: auto; margin-left: 932px; }
.saplogo text { font: bold 18px "Open Sans", sans-serif; fill: #fff; }
.info { display: flex; align-items: center; gap: 9px; padding-right: 24px; }
.info .line { width: 1px; height: 18px; background: #cdd0d4; }
.info .blank { width: 17px; }
.info .arrows { margin: 0 6px 0 8px; }
.session { width: 121px; display: flex; align-items: center; justify-content: space-between; }

.taskbar {
  height: 56px;
  display: flex;
  justify-content: space-between;
  background: #5bc0ea;
  border-top: 2px solid #3f7896;
}
.apps { display: flex; }
.apps button { width: 88px; display: flex; align-items: center; justify-content: center; }
.apps .start { width: 76px; padding-right: 8px; }
.apps .server { width: 80px; padding-right: 6px; }
.apps .current { width: 72px; background: #a4d8f7; box-shadow: 0 0 0 1px #2c6888, 5px 0 0 0 #7dcbf0, 6px 0 0 0 #2c6888, 11px 0 0 0 #7dcbf0, 12px 0 0 0 #2c6888; }
.tray { display: flex; align-items: center; gap: 10px; padding-right: 20px; font-size: 15px; color: #0d2a3c; }
.tray button { display: flex; margin-right: 7px; }
.tray .caret.up { border-bottom-color: #0d2a3c; }
.lang { margin: 0 15px 0 9px; }
.clock { display: flex; flex-direction: column; text-align: center; }

.sharing {
  position: absolute;
  top: 20px;
  right: 161px;
  height: 61px;
  display: flex;
  align-items: center;
  gap: 13px;
  padding: 0 14px 0 13px;
  color: #5a5a5e;
  background: #fff;
  border: 1px solid #c5c8cc;
  box-shadow: 0 3px 5px rgba(0, 0, 0, .2);
}
.sharing .handle { width: 8px; height: 16px; border: 2px solid #c5c7ca; border-width: 0 2px; }
.sharing button { width: 142px; height: 46px; border-radius: 23px; background: #ff662b; color: #fff; font-weight: 600; }
.sharing a { color: #c9512f; }

.winctl { position: absolute; top: 0; right: 24px; }
.winbtns { position: absolute; top: 2px; left: 27px; display: flex; gap: 4px; }
.winbtns button { width: 23px; height: 24px; border: 1px solid #1c3a86; border-radius: 3px; }
.winbtns svg { width: 21px; height: 22px; }

.watermark {
  position: absolute;
  top: 50%;
  left: 50%;
  display: flex;
  flex-direction: column;
  align-items: center;
  padding-top: 5px;
  font: 300 24px/32px "Noto Sans CJK SC", sans-serif;
  color: rgba(110, 116, 122, .6);
  white-space: nowrap;
  transform: translate(-50%, -50%) rotate(-45deg);
  pointer-events: none;
}
.pointer { position: absolute; top: 344px; left: 464px; z-index: 2; }
```
